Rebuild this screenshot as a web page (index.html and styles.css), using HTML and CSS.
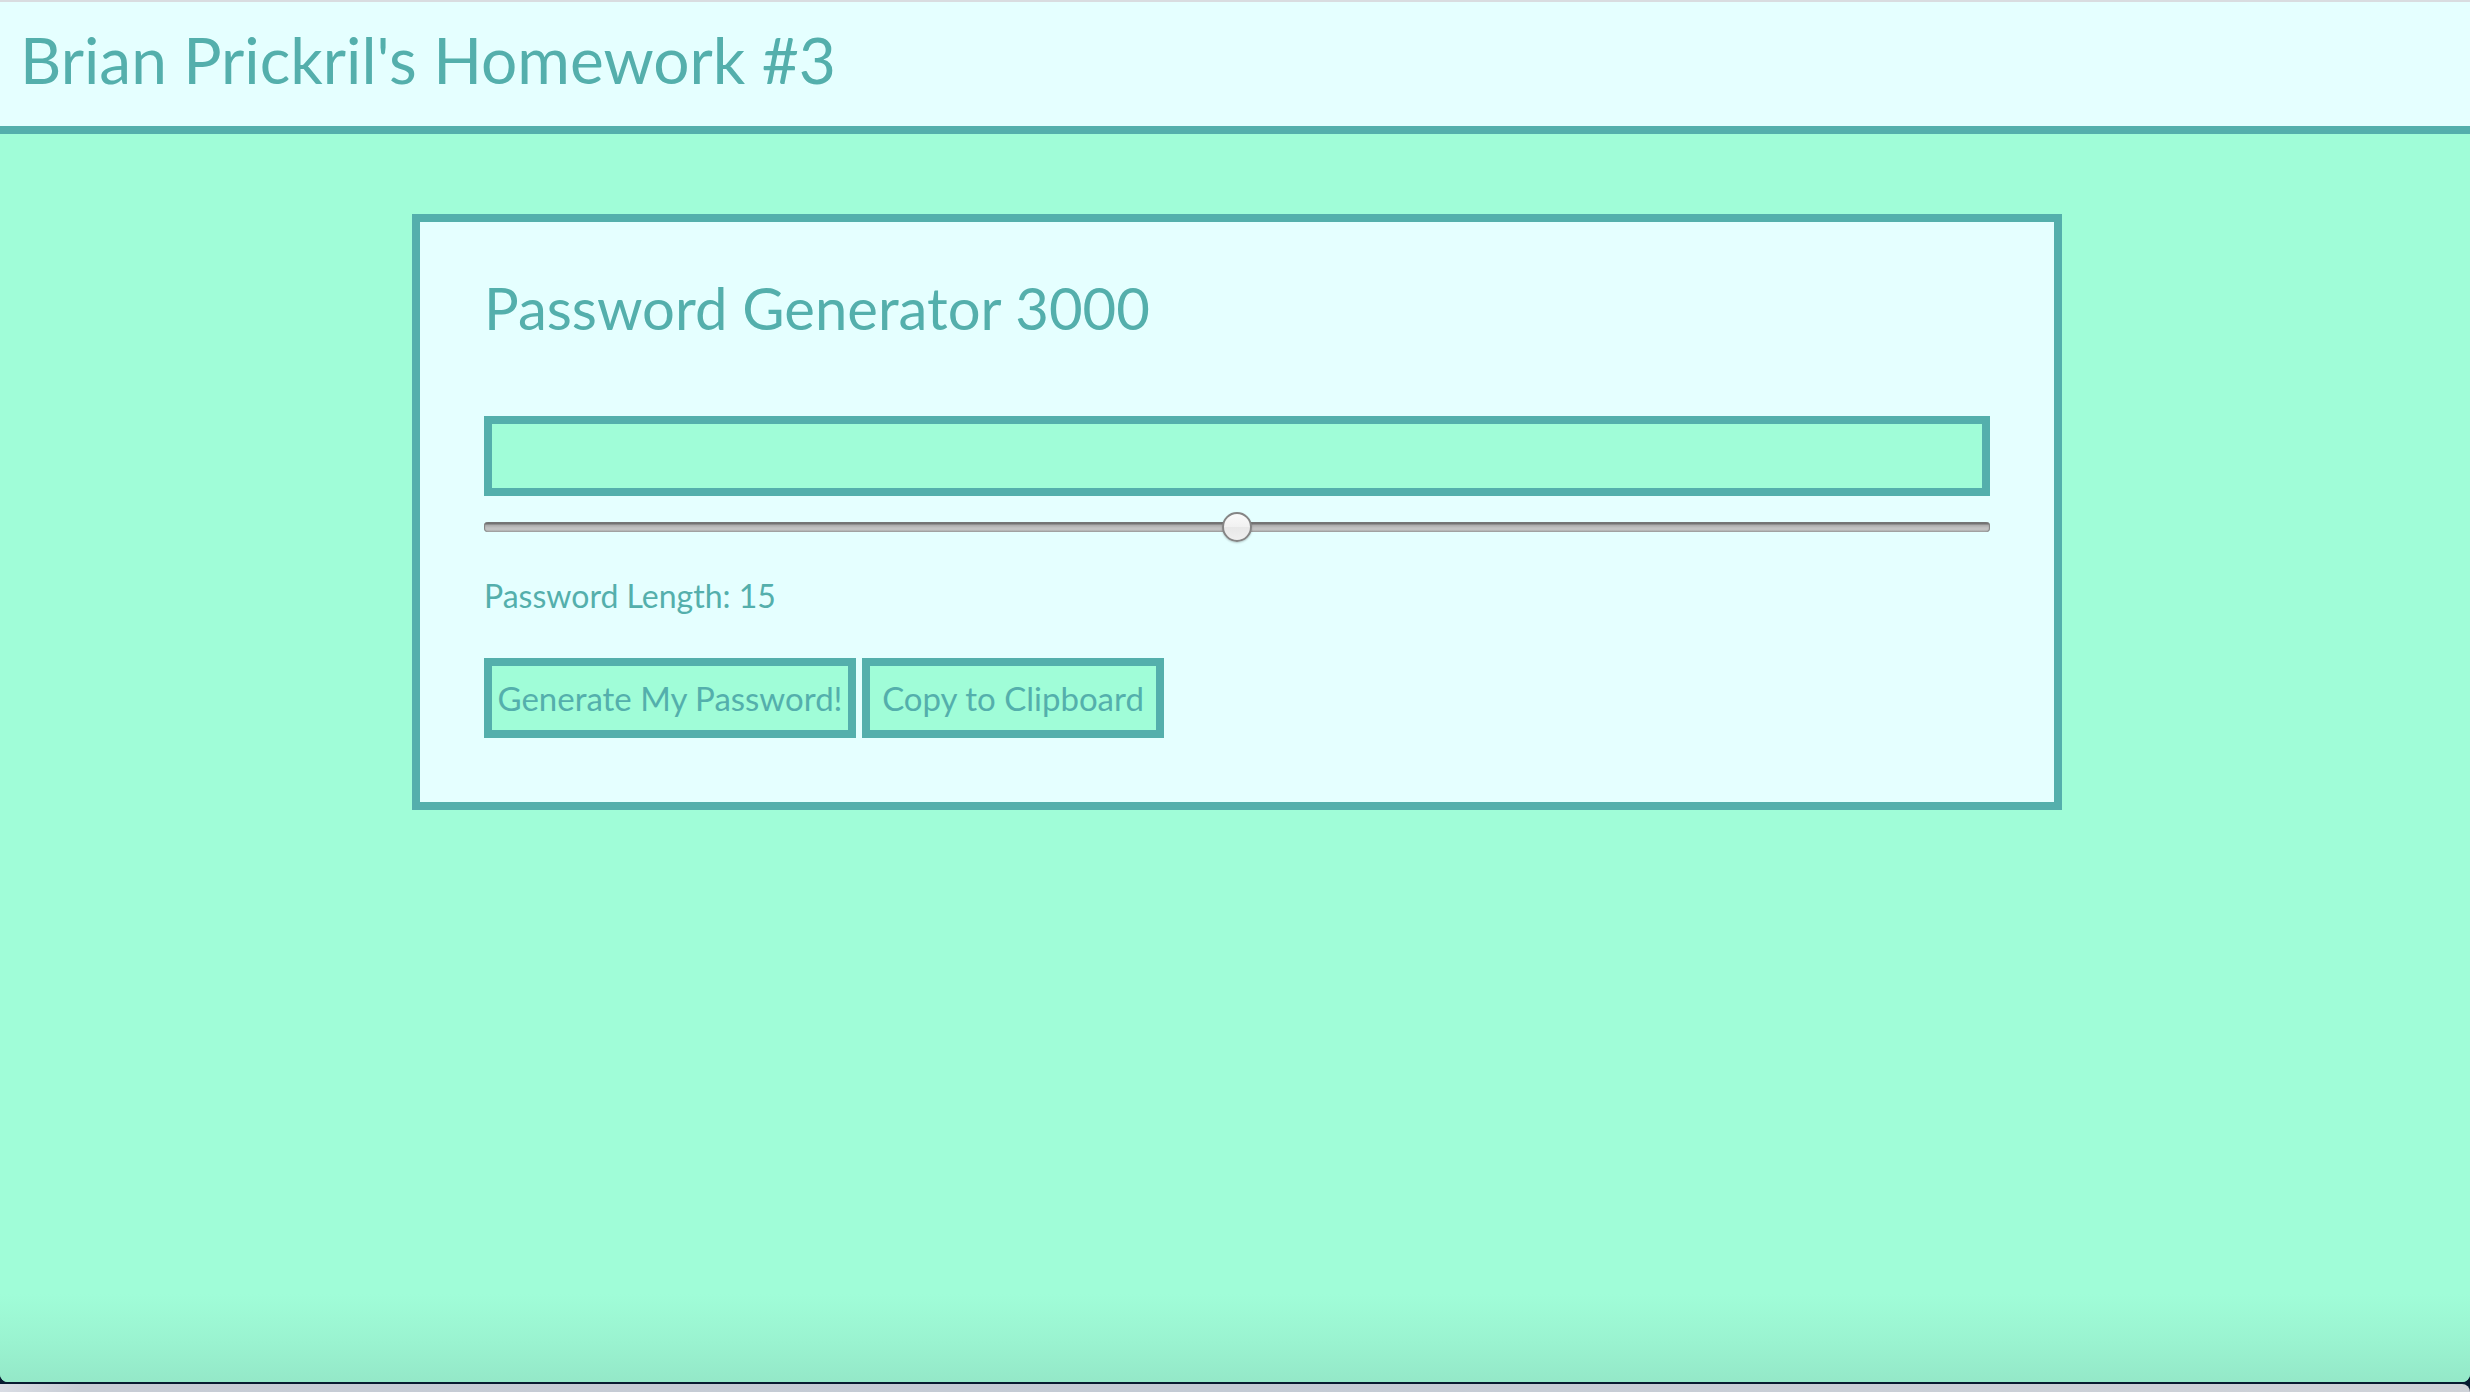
FILE: index.html
```
<!DOCTYPE html>
<html lang="en">
<head>
<meta charset="utf-8">
<meta name="viewport" content="width=device-width, initial-scale=1">
<title>Password Generator</title>
<link rel="stylesheet" href="styles.css">
</head>
<body>
<div class="page">
  <header class="site-header">
    <h1 class="site-title">Brian Prickril's Homework #3</h1>
  </header>
  <main class="content">
    <section class="card">
      <h2 class="card-title">Password Generator 3000</h2>
      <input class="password" type="text" aria-label="Generated password" readonly>
      <input class="slider" id="length" type="range" min="8" max="22" value="15">
      <label class="length-label" for="length">Password Length: 15</label>
      <div class="actions">
        <button class="button button-generate" type="button">Generate My Password!</button>
        <button class="button button-copy" type="button">Copy to Clipboard</button>
      </div>
    </section>
  </main>
</div>
<footer class="dock"></footer>
</body>
</html>
```
FILE: styles.css
```
* {
  box-sizing: border-box;
}

body {
  margin: 0;
  min-height: 100vh;
  display: flex;
  flex-direction: column;
  background: #071b30;
  color: #54afac;
  font-family: Papyrus, Lato, sans-serif;
}

.page {
  flex: 1;
  display: flex;
  flex-direction: column;
  overflow: hidden;
  border-radius: 0 0 8px 8px;
  background: #a0fdd8;
}

.site-header {
  padding: 18px 20px 26px;
  border-top: 2px solid #d9dce0;
  border-bottom: 8px solid #54afac;
  background: #e5ffff;
}

.site-title,
.card-title {
  margin: 0;
  font-weight: 400;
}

.site-title {
  font-size: 64px;
  line-height: 80px;
}

.content {
  flex: 1;
  padding: 80px 408px 80px 412px;
  background: linear-gradient(to top, #94e8c8 0, #9af3d0 40px, #a0fdd8 88px);
}

.card {
  display: flex;
  flex-direction: column;
  padding: 50px 64px 64px;
  border: 8px solid #54afac;
  background: #e5ffff;
}

.card-title {
  margin-bottom: 72px;
  font-size: 58px;
  line-height: 72px;
}

.password {
  width: 100%;
  height: 80px;
  padding: 8px;
  border: 8px solid #54afac;
  border-radius: 0;
  background: #a0fdd8;
  color: inherit;
  font: inherit;
  font-size: 32px;
  outline: none;
}

.slider {
  appearance: none;
  width: 100%;
  height: 30px;
  margin: 16px 0 34px;
  background: transparent;
}

.slider::-webkit-slider-runnable-track {
  height: 10px;
  border-radius: 4px;
  background: linear-gradient(#737373 0 2px, #aaaaaa 3px, #c2c2c2 6px, #c2c2c2 8px, #a9a9a9 9px);
  box-shadow: inset 1px 0 1px #808080, inset -1px 0 1px #808080;
}

.slider::-webkit-slider-thumb {
  appearance: none;
  width: 30px;
  height: 30px;
  margin-top: -10px;
  border: 2px solid #858585;
  border-radius: 50%;
  background: linear-gradient(#fafafa, #f1f1f1 50%, #e8e8e8 51%, #efefef);
  box-shadow: 0 1px 2px #0003;
}

.length-label {
  margin-bottom: 42px;
  font-size: 32px;
  line-height: 40px;
}

.actions {
  display: flex;
  flex-wrap: wrap;
  gap: 6px;
}

.button {
  height: 80px;
  padding: 0 4px;
  border: 8px solid #54afac;
  border-radius: 0;
  background: #a0fdd8;
  color: inherit;
  font: inherit;
  font-size: 33px;
}

.button-generate {
  min-width: 372px;
}

.button-copy {
  min-width: 302px;
}

.dock {
  height: 8px;
  margin-top: 2px;
  border-radius: 0 8px 0 0;
  background: linear-gradient(to right, #d9dce4, #c7ccd5 80px, #c3cad4 50%, #cfd2d8);
}
```
